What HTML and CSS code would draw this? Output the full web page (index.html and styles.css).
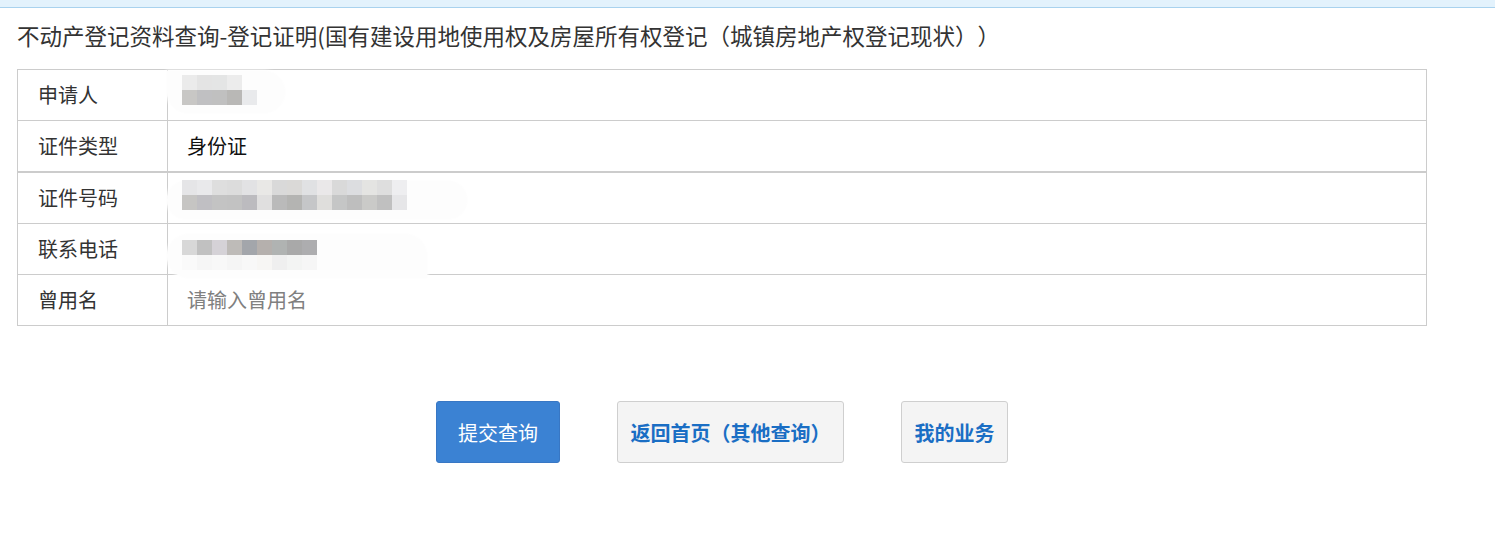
FILE: index.html
```html
<!DOCTYPE html>
<html lang="zh-CN">
<head>
<meta charset="utf-8">
<title>不动产登记资料查询</title>
<link rel="stylesheet" href="styles.css">
</head>
<body>
<div class="topbar"></div>
<div class="main">
	<h1 class="title">不动产登记资料查询-登记证明(国有建设用地使用权及房屋所有权登记（城镇房地产权登记现状））</h1>
	<div class="form">
		<div class="row">
			<div class="label">申请人</div>
			<div class="value blurred blob-name">
				<div class="mosaic mosaic-name">
					<div class="tiles">
						<i style="background:#ebebeb"></i><i style="background:#e4e4e4"></i><i style="background:#e4e5e5"></i><i style="background:#ececec"></i>
					</div>
					<div class="tiles">
						<i style="background:#c8c7c5"></i><i style="background:#c0c0c2"></i><i style="background:#c0c0c0"></i><i style="background:#b9b8b6"></i><i style="background:#e9eaec"></i>
					</div>
				</div>
			</div>
		</div>
		<div class="row row-thick">
			<div class="label">证件类型</div>
			<div class="value">身份证</div>
		</div>
		<div class="row">
			<div class="label">证件号码</div>
			<div class="value blurred blob-id">
				<div class="mosaic mosaic-id">
					<div class="tiles">
						<i style="background:#e5e5e7"></i><i style="background:#e9e9eb"></i><i style="background:#dedede"></i><i style="background:#dcdcdc"></i><i style="background:#e2e2e4"></i><i style="background:#e9e8e6"></i><i style="background:#d9d9d9"></i><i style="background:#dad9d7"></i><i style="background:#e0e1e3"></i><i style="background:#eae8e9"></i><i style="background:#d9d9d9"></i><i style="background:#dcdde0"></i><i style="background:#e4e4e2"></i><i style="background:#dedede"></i><i style="background:#eeeef0"></i>
					</div>
					<div class="tiles">
						<i style="background:#c6c5c3"></i><i style="background:#c0bfc3"></i><i style="background:#c3c3c3"></i><i style="background:#c2c2c2"></i><i style="background:#bcbbbf"></i><i style="background:#e0dfdf"></i><i style="background:#bababa"></i><i style="background:#b4b4b2"></i><i style="background:#c5c6c8"></i><i style="background:#dfdedc"></i><i style="background:#c5c6c6"></i><i style="background:#bebebe"></i><i style="background:#cacac8"></i><i style="background:#c0c0c0"></i><i style="background:#e6e6e8"></i>
					</div>
				</div>
			</div>
		</div>
		<div class="row">
			<div class="label">联系电话</div>
			<div class="value blurred blob-tel">
				<div class="mosaic mosaic-tel">
					<div class="tiles">
						<i style="background:#d8d8d8"></i><i style="background:#c1c1c1"></i><i style="background:#d5d2d7"></i><i style="background:#bebbb8"></i><i style="background:#a3a6ab"></i><i style="background:#b5b0ad"></i><i style="background:#b0b3b2"></i><i style="background:#a9a9a9"></i><i style="background:#adadaf"></i>
					</div>
					<div class="tiles">
						<i style="background:#fafafa"></i><i style="background:#f6f6f6"></i><i style="background:#f8f8f8"></i><i style="background:#f5f5f5"></i><i style="background:#f8f8f8"></i><i style="background:#f7f6f4"></i><i style="background:#efefef"></i><i style="background:#f3f4f3"></i><i style="background:#f6f6f6"></i>
					</div>
				</div>
			</div>
		</div>
		<div class="row">
			<div class="label">曾用名</div>
			<div class="value"><input class="ipt" type="text" placeholder="请输入曾用名"></div>
		</div>
	</div>
	<div class="btns">
		<button class="btn btn-primary btn-submit">提交查询</button>
		<button class="btn btn-default btn-home">返回首页（其他查询）</button>
		<button class="btn btn-default btn-mine">我的业务</button>
	</div>
</div>
</body>
</html>
```

FILE: styles.css
```css
*{
	padding: 0;
	margin: 0;
	box-sizing: border-box;
}
body{
	font-family: "Noto Sans CJK SC", "Liberation Sans", sans-serif;
	color: #333;
	background: #fff;
}
.topbar{
	height: 8px;
	background: #e3f2fc;
	border-bottom: 1px solid #a9d2ee;
}
.main{
	padding: 0 68px 0 17px;
}
.title{
	margin: 12px 0 19px;
	font-size: 22.5px;
	font-weight: normal;
	line-height: 30px;
	color: #333;
	white-space: nowrap;
	text-spacing-trim: space-all;
}
.form{
	width: 1410px;
	border: 1px solid #ccc;
}
.row{
	display: flex;
	height: 51px;
	border-bottom: 1px solid #ccc;
}
.row:last-child{
	height: 50px;
	border-bottom: none;
}
.row-thick{
	height: 52px;
	border-bottom-width: 2px;
}
.label{
	width: 150px;
	padding-left: 20px;
	border-right: 1px solid #ccc;
	font-size: 20px;
	line-height: 50px;
	color: #333;
}
.value{
	flex: 1;
	padding-left: 19px;
	font-size: 20px;
	line-height: 50px;
	color: #111;
}
.blurred{
	position: relative;
	padding-left: 14px;
}
/* 打码区域外的白色模糊晕 */
.blurred::before{
	content: "";
	position: absolute;
	left: -1px;
	background: #fdfdfd;
	border-radius: 0 22px 22px 22px;
	box-shadow: 0 0 3px 1px #fefefe;
}
.blob-name::before{
	top: 1px;
	width: 118px;
	height: 42px;
}
.blob-id::before{
	top: 8px;
	width: 300px;
	height: 38px;
	border-radius: 20px;
}
.blob-tel::before{
	top: 10px;
	width: 260px;
	height: 44px;
	border-radius: 22px 22px 0 22px;
}
.mosaic{
	position: relative;
}
.mosaic-name{ padding-top: 5px; }
.mosaic-id{ padding-top: 7px; }
.mosaic-tel{ padding-top: 16px; }
.tiles{
	display: flex;
	height: 15px;
}
.tiles i{
	display: block;
	width: 15px;
	height: 15px;
}
.ipt{
	width: 100%;
	height: 48px;
	border: none;
	outline: none;
	font: 20px "Noto Sans CJK SC", sans-serif;
	color: #111;
	background: transparent;
}
.ipt::placeholder{
	color: #808080;
}
.btns{
	display: flex;
	justify-content: center;
	gap: 57px;
	width: 1410px;
	margin-top: 75px;
}
.btn{
	height: 62px;
	padding: 0;
	border-radius: 3px;
	font: 20px "Noto Sans CJK SC", sans-serif;
	cursor: pointer;
}
.btn-submit{ width: 124px; }
.btn-home{ width: 227px; }
.btn-mine{ width: 107px; }
.btn-primary{
	background: #3b82d3;
	border: 1px solid #3877c4;
	color: #fff;
}
.btn-default{
	background: #f4f4f4;
	border: 1px solid #cfcfcf;
	color: #1a6ec4;
	font-weight: bold;
}
```
